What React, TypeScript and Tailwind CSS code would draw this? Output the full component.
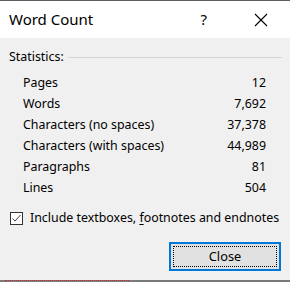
import React from "react";

const rows: [string, string][] = [
  ["Pages", "12"],
  ["Words", "7,692"],
  ["Characters (no spaces)", "37,378"],
  ["Characters (with spaces)", "44,989"],
  ["Paragraphs", "81"],
  ["Lines", "504"],
];

export default function App() {
  return (
    <div
      className="relative w-[290px] h-[282px] overflow-hidden bg-[#f0f0f0] flex flex-col text-[#000]"
      style={{ fontFamily: '"Noto Sans", "Open Sans", sans-serif' }}
    >
      <div className="h-px bg-[#5f5f5f] shrink-0" />
      <div className="h-[37px] bg-white flex items-center shrink-0">
        <span className="ml-[9px] text-[15px] leading-none">Word Count</span>
        <span className="ml-auto mr-[47px] text-[15px] leading-none">?</span>
        <svg width="14" height="14" viewBox="0 0 14 14" className="mr-[22px]">
          <path d="M1 1 L13 13 M13 1 L1 13" stroke="#000" strokeWidth="1.1" fill="none" />
        </svg>
      </div>
      <div className="flex-1 flex flex-col text-[12.4px] leading-none">
        <div className="flex items-center mt-[12px] ml-[9px] mr-[8px] h-[14px]">
          <span>Statistics:</span>
          <div className="flex-1 h-px bg-[#d5d5d5] ml-[4px]" />
        </div>
        <div className="flex flex-col mt-[9px] ml-[23px] mr-[24px]">
          {rows.map(([k, v]) => (
            <div key={k} className="flex justify-between items-center h-[21px]">
              <span>{k}</span>
              <span>{v}</span>
            </div>
          ))}
        </div>
        <div className="flex items-center mt-[12px] ml-[10px] h-[14px]">
          <div className="w-[13px] h-[13px] border border-[#333] bg-white flex items-center justify-center">
            <svg width="11" height="11" viewBox="0 0 11 11">
              <path d="M1.5 5.5 L4 8 L9.5 2" stroke="#444" strokeWidth="1" fill="none" />
            </svg>
          </div>
          <span className="ml-[7px]">
            Include textboxes, <span className="underline underline-offset-2">f</span>ootnotes and endnotes
          </span>
        </div>
        <div className="flex justify-end mt-[17px] mr-[9px]">
          <button className="w-[112px] h-[29px] border-2 border-[#0078d7] bg-[#e1e1e1] p-[2px]">
            <div className="w-full h-full border border-dotted border-[#000] flex items-center justify-center text-[12.8px]">
              Close
            </div>
          </button>
        </div>
      </div>
      <div className="absolute left-0 right-0 bottom-0 h-[2px] bg-[#7a7a7a]" />
      <div className="absolute left-[5px] w-[124px] bottom-[1px] h-px border-t border-dotted border-[#c03030]" />
    </div>
  );
}
